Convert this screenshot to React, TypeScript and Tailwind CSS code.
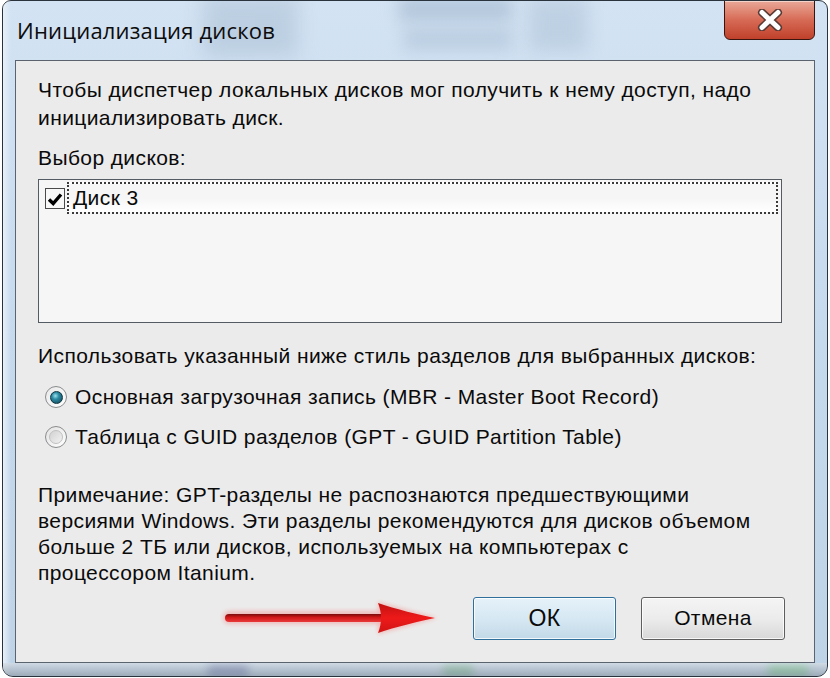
import React from "react";

function CloseGlyph() {
  return (
    <svg width="26" height="22" viewBox="0 0 26 22">
      <path d="M5 3.5 L21 18.5 M21 3.5 L5 18.5" stroke="#5a3a34" strokeWidth="8" strokeLinecap="round" />
      <path d="M5 3.5 L21 18.5 M21 3.5 L5 18.5" stroke="#ffffff" strokeWidth="5" strokeLinecap="round" />
    </svg>
  );
}

function CheckMark() {
  return (
    <svg width="16" height="16" viewBox="0 0 16 16">
      <path d="M2 8.5 L6.2 12.5 L14 3.5" stroke="#000" strokeWidth="3.4" fill="none" strokeLinejoin="miter" />
    </svg>
  );
}

function Arrow() {
  return (
    <svg width="222" height="44" viewBox="0 0 222 44">
      <defs>
        <linearGradient id="shaft" x1="0" y1="0" x2="0" y2="1">
          <stop offset="0" stopColor="#7a0c0c" />
          <stop offset="0.45" stopColor="#d41818" />
          <stop offset="1" stopColor="#e83a3a" />
        </linearGradient>
        <linearGradient id="head" x1="0" y1="0" x2="0" y2="1">
          <stop offset="0" stopColor="#c01010" />
          <stop offset="0.5" stopColor="#ee1a1a" />
          <stop offset="1" stopColor="#d01414" />
        </linearGradient>
        <filter id="glow" x="-10%" y="-50%" width="120%" height="200%">
          <feGaussianBlur stdDeviation="2.2" />
        </filter>
      </defs>
      <g filter="url(#glow)" opacity="0.5">
        <rect x="3" y="15" width="165" height="13" rx="6.5" fill="#f08a8a" />
        <path d="M158 6 L217 22 L158 38 Z" fill="#f08a8a" />
      </g>
      <rect x="5" y="18" width="162" height="8" rx="4" fill="url(#shaft)" />
      <path d="M158 7 C175 13 200 19 215 22 C200 25 175 31 158 37 C162 27 162 17 158 7 Z" fill="url(#head)" />
    </svg>
  );
}

export default function App() {
  return (
    <div className="w-[830px] h-[678px] bg-white overflow-hidden font-['Liberation_Sans',Arial,sans-serif] text-[#0a0a0a]">
      <div className="relative ml-[2px] mr-[2px] h-[677px] rounded-t-[9px] rounded-b-[11px] border border-[#2a323c] bg-gradient-to-b from-[#d3e3f3] via-[#c6daee] to-[#bfd3e7] flex flex-col px-[12px] pb-[13px] overflow-hidden">
        {/* blurred desktop shapes behind the glass */}
        <div className="absolute left-[200px] top-[-6px] w-[95px] h-[62px] bg-[#a7bcd1] opacity-50 blur-[10px]" />
        <div className="absolute left-[395px] top-[-4px] w-[115px] h-[24px] bg-[#97adc5] opacity-50 blur-[8px]" />
        <div className="absolute left-[400px] top-[26px] w-[110px] h-[24px] bg-[#a3b8ce] opacity-45 blur-[8px]" />
        <div className="absolute left-[525px] top-[-4px] w-[60px] h-[55px] bg-[#a7bcd1] opacity-45 blur-[9px]" />
        <div className="absolute left-[0px] top-[0px] w-[8px] h-[677px] bg-gradient-to-r from-[#e8f0f8] to-transparent" />
        <div className="absolute left-[205px] bottom-[0px] w-[40px] h-[12px] bg-[#1c2a7a] opacity-70 blur-[4px]" />
        <div className="absolute left-[440px] bottom-[0px] w-[30px] h-[12px] bg-[#2f9a3a] opacity-70 blur-[4px]" />
        <div className="absolute left-[765px] bottom-[0px] w-[40px] h-[12px] bg-[#3ec24a] opacity-80 blur-[4px]" />
        <div className="absolute left-0 right-0 bottom-0 h-[13px] bg-gradient-to-b from-[#d6dde4] to-[#8e9aa6] opacity-70" />

        {/* title bar */}
        <div className="relative h-[59px] flex items-start">
          <div className="pl-[2px] pt-[15px] text-[22px] leading-[28px] tracking-[0.2px] text-[#0c0c0c] font-['Open_Sans',Arial,sans-serif] whitespace-nowrap">
            Инициализация дисков
          </div>
          <div className="ml-auto mr-[0px] -mt-[1px] w-[91px] h-[40px] rounded-b-[6px] border border-[#3a1510] bg-gradient-to-b from-[#e9a898] via-[#d66a55] to-[#c0402a] flex items-center justify-center shadow-[inset_0_1px_0_rgba(255,255,255,0.5)]">
            <CloseGlyph />
          </div>
        </div>

        {/* client area */}
        <div className="relative flex-1 border border-[#5a636e] bg-[#ecebeb] flex flex-col pl-[22px] pr-[32px] text-[21px] leading-[28px] tracking-[0.4px]">
          <div className="mt-[15px]">
            <div className="whitespace-nowrap">Чтобы диспетчер локальных дисков мог получить к нему доступ, надо</div>
            <div className="whitespace-nowrap">инициализировать диск.</div>
          </div>
          <div className="mt-[12px] whitespace-nowrap">Выбор дисков:</div>

          <div className="mt-[7px] h-[144px] border border-[#555b62] bg-[#f6f6f6]">
            <div className="flex items-start mt-[2px]">
              <div className="ml-[6px] mt-[6px] w-[20px] h-[21px] border border-[#4a4a4a] bg-[#f8f8f8] flex items-center justify-center">
                <CheckMark />
              </div>
              <div className="ml-[2px] mr-[3px] flex-1 h-[32px] border-2 border-dotted border-[#3a3a3a] bg-gradient-to-b from-[#f6f6f6] via-[#f6f6f6] to-[#ffffff] flex items-center pl-[4px]">
                Диск 3
              </div>
            </div>
          </div>

          <div className="mt-[19px] whitespace-nowrap">Использовать указанный ниже стиль разделов для выбранных дисков:</div>

          <div className="mt-[13px] flex items-center h-[28px] pl-[7px]">
            <div className="w-[22px] h-[22px] rounded-full border border-[#8a8c8e] bg-gradient-to-br from-[#e8e8e8] to-[#ffffff] flex items-center justify-center">
              <div className="w-[13px] h-[13px] rounded-full bg-[radial-gradient(circle_at_40%_35%,#9fe0ee_0%,#2c8ca4_35%,#113e4e_100%)] border border-[#0e3440]" />
            </div>
            <span className="ml-[8px] whitespace-nowrap">Основная загрузочная запись (MBR - Master Boot Record)</span>
          </div>
          <div className="mt-[12px] flex items-center h-[28px] pl-[7px]">
            <div className="w-[22px] h-[22px] rounded-full border border-[#8a8c8e] bg-gradient-to-br from-[#e2e2e2] to-[#ffffff] flex items-center justify-center">
              <div className="w-[14px] h-[14px] rounded-full bg-gradient-to-br from-[#d2d2d2] to-[#f2f2f2] border border-[#c0c0c0]" />
            </div>
            <span className="ml-[8px] whitespace-nowrap">Таблица с GUID разделов (GPT - GUID Partition Table)</span>
          </div>

          <div className="mt-[31px] leading-[26px]">
            <div className="whitespace-nowrap">Примечание: GPT-разделы не распознаются предшествующими</div>
            <div className="whitespace-nowrap">версиями Windows. Эти разделы рекомендуются для дисков объемом</div>
            <div className="whitespace-nowrap">больше 2 ТБ или дисков, используемых на компьютерах с</div>
            <div className="whitespace-nowrap">процессором Itanium.</div>
          </div>

          <div className="mt-[10px] flex items-center mr-[-3px]">
            <div className="ml-[182px]">
              <Arrow />
            </div>
            <div className="ml-auto w-[143px] h-[43px] rounded-[3px] border border-[#2f6f9c] bg-gradient-to-b from-[#e6f2f9] via-[#d6e8f3] to-[#c3d9e7] shadow-[inset_0_0_0_1px_rgba(255,255,255,0.8)] flex items-center justify-center text-[23px]">
              ОК
            </div>
            <div className="ml-[25px] w-[144px] h-[43px] rounded-[3px] border border-[#5e5e5e] bg-gradient-to-b from-[#f4f4f4] via-[#ececec] to-[#d8d8d8] shadow-[inset_0_0_0_1px_rgba(255,255,255,0.8)] flex items-center justify-center text-[21px]">
              Отмена
            </div>
          </div>
        </div>
      </div>
    </div>
  );
}
